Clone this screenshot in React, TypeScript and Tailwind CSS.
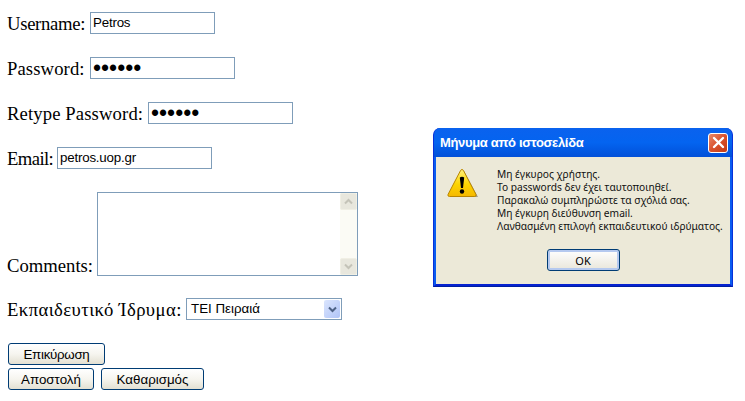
export default function App() {
  const inputCls = "h-[22px] border border-[#7f9db9] bg-white px-[2px] font-['Liberation_Sans',sans-serif] text-[13.33px] tracking-[-0.2px] text-black outline-none";
  const pwCls = "h-[22px] w-[145px] border border-[#7f9db9] bg-white px-[2px] font-['Liberation_Sans',sans-serif] text-[23px] text-black outline-none";
  const labelCls = "shrink-0 whitespace-nowrap leading-[20px]";
  const btnCls = "h-[22px] rounded-[3px] border border-[#003c74] bg-gradient-to-b from-white via-[#f6f5ef] to-[#e3e0d2] font-['Liberation_Sans',sans-serif] text-[13.33px] text-black";
  const lines = [
    "Μη έγκυρος χρήστης.",
    "Το passwords δεν έχει ταυτοποιηθεί.",
    "Παρακαλώ συμπληρώστε τα σχόλιά σας.",
    "Μη έγκυρη διεύθυνση email.",
    "Λανθασμένη επιλογή εκπαιδευτικού ιδρύματος.",
  ];
  return (
    <div className="relative h-[401px] w-[745px] overflow-hidden bg-white font-['Liberation_Serif',serif] text-[18.67px] leading-[22px] text-black">
      <form className="flex flex-col pl-[7px] pt-[12px]">
        <label className="flex items-end gap-[5px]">
          <span className={`${labelCls} w-[78px] tracking-[-0.3px]`}>Username:</span>
          <input readOnly value="Petros" className={`${inputCls} w-[125px]`} />
        </label>
        <label className="mt-[23px] flex items-end gap-[5px]">
          <span className={`${labelCls} w-[78px] tracking-[0.1px]`}>Password:</span>
          <input readOnly type="password" value="petros" className={pwCls} />
        </label>
        <label className="mt-[23px] flex items-end gap-[5px]">
          <span className={`${labelCls} w-[136px] tracking-[0.12px]`}>Retype Password:</span>
          <input readOnly type="password" value="petros" className={pwCls} />
        </label>
        <label className="mt-[23px] flex items-end gap-[5px]">
          <span className={`${labelCls} w-[45px] tracking-[-0.6px]`}>Email:</span>
          <input readOnly value="petros.uop.gr" className={`${inputCls} w-[155px]`} />
        </label>
        <div className="mt-[23px] flex items-end gap-[5px]">
          <span className={`${labelCls} w-[85px]`}>Comments:</span>
          <div className="flex h-[84px] w-[261px] border border-[#7f9db9] bg-white">
            <div className="flex-1" />
            <div className="flex w-[17px] flex-col justify-between bg-[#fbfbf5]">
              <div className="flex h-[17px] items-center justify-center rounded-[2px] border border-[#f0efe4] bg-[#e8e7dd]">
                <svg width="9" height="7" viewBox="0 0 9 7" fill="none" stroke="#c4c3b8" strokeWidth="2"><path d="M1 5.5 4.5 2 8 5.5" /></svg>
              </div>
              <div className="flex h-[17px] items-center justify-center rounded-[2px] border border-[#f0efe4] bg-[#e8e7dd]">
                <svg width="9" height="7" viewBox="0 0 9 7" fill="none" stroke="#c4c3b8" strokeWidth="2"><path d="M1 1.5 4.5 5 8 1.5" /></svg>
              </div>
            </div>
          </div>
        </div>
        <div className="mt-[22px] flex items-end gap-[5px]">
          <span className={`${labelCls} w-[174px] tracking-[0.42px]`}>Εκπαιδευτικό Ίδρυμα:</span>
          <div className="flex h-[22px] w-[156px] items-center justify-between border border-[#7f9db9] bg-white pl-[4px] pr-[1px] font-['Liberation_Sans',sans-serif] text-[13.33px]">
            <span>ΤΕΙ Πειραιά</span>
            <div className="flex h-[18px] w-[16px] items-center justify-center rounded-[2px] bg-gradient-to-br from-[#dbe5fd] to-[#b0c4f7]">
              <svg width="9" height="7" viewBox="0 0 9 7" fill="none" stroke="#4d6185" strokeWidth="2"><path d="M1 1.5 4.5 5 8 1.5" /></svg>
            </div>
          </div>
        </div>
        <div className="ml-[1px] mt-[23px] flex flex-col gap-[3px]">
          <div className="flex">
            <button type="button" className={`${btnCls} w-[97px] tracking-[-0.3px]`}>Επικύρωση</button>
          </div>
          <div className="flex gap-[7px]">
            <button type="button" className={`${btnCls} w-[86px]`}>Αποστολή</button>
            <button type="button" className={`${btnCls} w-[103px]`}>Καθαρισμός</button>
          </div>
        </div>
      </form>

      <div className="absolute left-[433px] top-[128px] flex h-[159px] w-[300px] flex-col overflow-hidden rounded-t-[7px] border-x border-b border-x-[#0831d9] border-b-[#001ea0] bg-[#0831d9]">
        <div className="-mx-[1px] flex h-[29px] shrink-0 items-center justify-between bg-gradient-to-b from-[#0a62ee] via-[#0464f0] to-[#0250d8] pl-[7px] pr-[5px] font-['Liberation_Sans',sans-serif] text-[13px] font-bold leading-none tracking-[-0.33px] text-white">
          <span>Μήνυμα από ιστοσελίδα</span>
          <div className="flex h-[20px] w-[20px] items-center justify-center rounded-[3px] border border-white bg-gradient-to-br from-[#e8896a] via-[#d9512c] to-[#c23a13]">
            <svg width="13" height="13" viewBox="0 0 13 13" stroke="#fff" strokeWidth="2.4" strokeLinecap="round"><path d="M2 2 11 11M11 2 2 11" /></svg>
          </div>
        </div>
        <div className="flex flex-1 flex-col border-x-2 border-b-2 border-x-[#0a5cf0] border-b-[#0622d0] bg-[#ece9d8] font-['Noto_Sans',sans-serif] text-[10.2px] leading-[13px] text-[#111]">
          <div className="flex pl-[11px] pt-[11px]">
            <svg width="32" height="32" viewBox="0 0 32 32" className="shrink-0">
              <defs>
                <linearGradient id="warn" x1="0" y1="0" x2="0" y2="1">
                  <stop offset="0" stopColor="#fff27a" />
                  <stop offset="0.55" stopColor="#fdd400" />
                  <stop offset="1" stopColor="#f5b800" />
                </linearGradient>
              </defs>
              <path d="M17 3 31 29 H7Z" fill="#6b6858" opacity="0.6" />
              <path d="M15 1.5 Q16 1.5 16.6 2.8 L29 26.5 Q29.6 28.5 27.5 28.5 H2.5 Q0.4 28.5 1 26.5 L13.4 2.8 Q14 1.5 15 1.5Z" fill="url(#warn)" stroke="#b98500" strokeWidth="1" />
              <path d="M12.8 9.5 Q15 7.8 17.2 9.5 L16 20 H14Z" fill="#000" />
              <circle cx="15" cy="23.5" r="2.2" fill="#000" />
            </svg>
            <div className="ml-[18px]">
              {lines.map((l) => (
                <div key={l} className="whitespace-nowrap">{l}</div>
              ))}
            </div>
          </div>
          <div className="mt-[16px] flex justify-center">
            <button type="button" className="h-[22px] w-[73px] rounded-[3px] border border-[#003c74] bg-gradient-to-b from-white to-[#e9e6da] text-[11px] text-black shadow-[inset_0_0_0_2px_#b5c9ef]">OK</button>
          </div>
        </div>
      </div>
    </div>
  );
}
